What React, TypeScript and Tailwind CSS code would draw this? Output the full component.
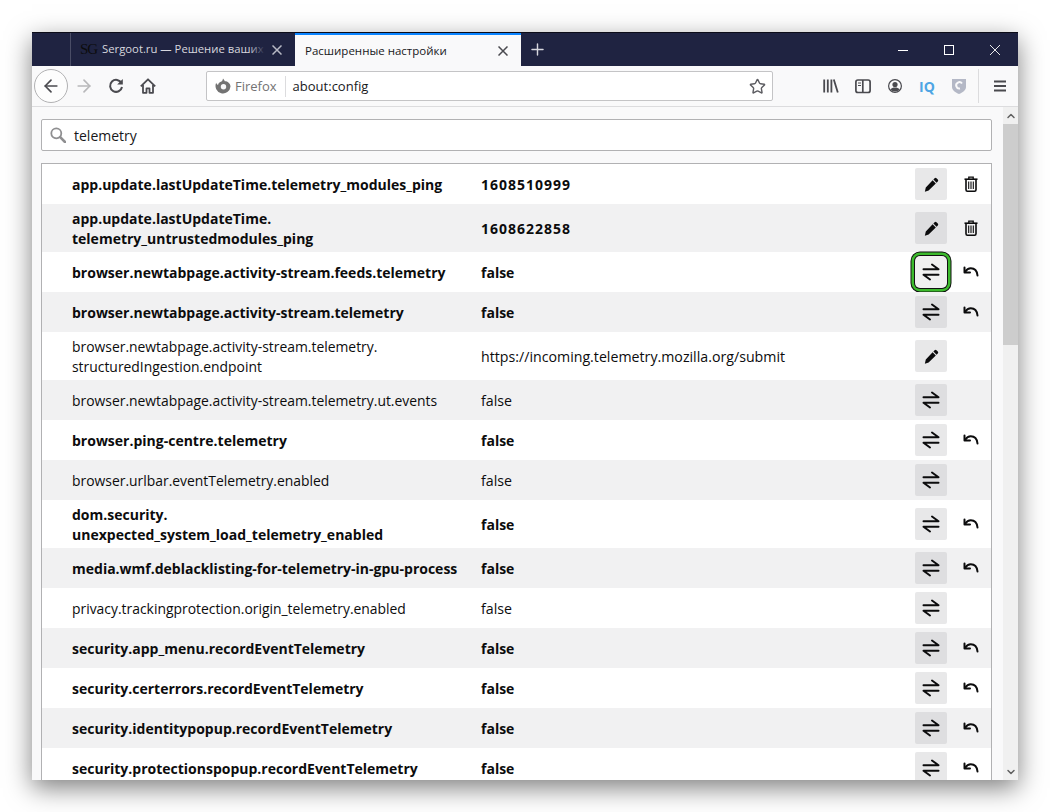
import { ArrowLeft, ArrowRight, Star, Plus, ChevronUp, ChevronDown } from "lucide-react";

type Row = { name: string[]; value: string; bold?: boolean; kind: "edit" | "toggle"; action?: "trash" | "reset"; focus?: boolean };

const rows: Row[] = [
  { name: ["app.update.lastUpdateTime.telemetry_modules_ping"], value: "1608510999", bold: true, kind: "edit", action: "trash" },
  { name: ["app.update.lastUpdateTime.", "telemetry_untrustedmodules_ping"], value: "1608622858", bold: true, kind: "edit", action: "trash" },
  { name: ["browser.newtabpage.activity-stream.feeds.telemetry"], value: "false", bold: true, kind: "toggle", action: "reset", focus: true },
  { name: ["browser.newtabpage.activity-stream.telemetry"], value: "false", bold: true, kind: "toggle", action: "reset" },
  { name: ["browser.newtabpage.activity-stream.telemetry.", "structuredIngestion.endpoint"], value: "https://incoming.telemetry.mozilla.org/submit", kind: "edit" },
  { name: ["browser.newtabpage.activity-stream.telemetry.ut.events"], value: "false", kind: "toggle" },
  { name: ["browser.ping-centre.telemetry"], value: "false", bold: true, kind: "toggle", action: "reset" },
  { name: ["browser.urlbar.eventTelemetry.enabled"], value: "false", kind: "toggle" },
  { name: ["dom.security.", "unexpected_system_load_telemetry_enabled"], value: "false", bold: true, kind: "toggle", action: "reset" },
  { name: ["media.wmf.deblacklisting-for-telemetry-in-gpu-process"], value: "false", bold: true, kind: "toggle", action: "reset" },
  { name: ["privacy.trackingprotection.origin_telemetry.enabled"], value: "false", kind: "toggle" },
  { name: ["security.app_menu.recordEventTelemetry"], value: "false", bold: true, kind: "toggle", action: "reset" },
  { name: ["security.certerrors.recordEventTelemetry"], value: "false", bold: true, kind: "toggle", action: "reset" },
  { name: ["security.identitypopup.recordEventTelemetry"], value: "false", bold: true, kind: "toggle", action: "reset" },
  { name: ["security.protectionspopup.recordEventTelemetry"], value: "false", bold: true, kind: "toggle", action: "reset" },
];

const ToggleIcon = () => (
  <svg width="18" height="18" viewBox="0 0 18 18" fill="none" stroke="#0c0c0d" strokeWidth="2" strokeLinecap="round" strokeLinejoin="round">
    <path d="M1.500 6.200h15L10 1.500" />
    <path d="M16.500 11.800h-15l6.500 4.700" />
  </svg>
);

const ResetIcon = () => (
  <svg width="16" height="16" viewBox="0 0 16 16" fill="none" stroke="#0c0c0d" strokeWidth="2" strokeLinecap="round" strokeLinejoin="round">
    <path d="M1.500 3.500v5h5.500" />
    <path d="M2 8c1.800-2.700 3.800-3.700 5.800-3.700 3.400 0 6.200 2.500 6.700 7.200" />
  </svg>
);

const PencilIcon = () => (
  <svg width="15" height="15" viewBox="0 0 16 16" fill="#0c0c0d">
    <path d="M11.300 1.300a1.400 1.400 0 0 1 2 0l1.400 1.400a1.400 1.400 0 0 1 0 2l-1.300 1.300-3.400-3.400zM9.200 3.400l3.400 3.400-7.700 7.700-4 1.100 1-4.300z" />
  </svg>
);

const TrashIcon = () => (
  <svg width="14" height="16" viewBox="0 0 14 16" fill="none" stroke="#0c0c0d">
    <path d="M.5 3.200h13" strokeWidth="1.600" />
    <path d="M4.800 3V1.200h4.400V3" strokeWidth="1.300" />
    <path d="M2 3.500v10.300c0 .8.600 1.400 1.400 1.400h7.200c.8 0 1.400-.6 1.400-1.400V3.500" strokeWidth="1.600" />
    <path d="M4.700 5.500v7.500M7 5.500v7.500M9.300 5.500v7.500" strokeWidth="1.100" />
  </svg>
);

const ReloadIcon = () => (
  <svg width="16" height="16" viewBox="0 0 16 16" fill="none" stroke="#4a4a4f" strokeWidth="2">
    <path d="M13.500 5.200A6 6 0 1 0 14 9" />
    <path d="M14.800 1v5.600H9.200" fill="#4a4a4f" stroke="none" />
  </svg>
);

const HomeIcon = () => (
  <svg width="16" height="16" viewBox="0 0 16 16" fill="none" stroke="#4a4a4f" strokeWidth="1.800" strokeLinejoin="round">
    <path d="M.8 8.300 8 1.300l7.200 7" />
    <path d="M3 7v7.800h3.500v-4.500h3v4.500H13V7" />
  </svg>
);

const SearchIcon = () => (
  <svg width="16" height="16" viewBox="0 0 16 16" fill="none" stroke="#8f8f91" strokeLinecap="round">
    <circle cx="6.300" cy="6.300" r="5" strokeWidth="1.800" />
    <path d="M10.200 10.200 15 15" strokeWidth="2.600" />
  </svg>
);

const LibraryIcon = () => (
  <svg width="16" height="16" viewBox="0 0 16 16" fill="none" stroke="#4a4a4f" strokeWidth="1.800">
    <path d="M1.200 1.500v13M4.800 1.500v13M8.400 1.500v13M10.800 1.500l4 13" />
  </svg>
);

const SidebarIcon = () => (
  <svg width="16" height="16" viewBox="0 0 16 16" fill="none" stroke="#4a4a4f" strokeWidth="1.700">
    <rect x=".9" y="2" width="14.200" height="12.500" rx="2" />
    <path d="M7.800 2v12.500" />
    <path d="M3 5h3M3 7.500h3" strokeWidth="1" />
  </svg>
);

const AccountIcon = () => (
  <svg width="16" height="16" viewBox="0 0 16 16" fill="#4a4a4f">
    <path fillRule="evenodd" d="M8 1a7 7 0 1 1 0 14A7 7 0 0 1 8 1zm0 1.200a5.800 5.800 0 1 0 0 11.600A5.800 5.800 0 0 0 8 2.200z" />
    <circle cx="8" cy="6.500" r="2.600" />
    <path d="M3.500 11.500c1-1.500 2.500-2 4.500-2s3.500.5 4.500 2c-1 1.300-2.700 2-4.500 2s-3.500-.7-4.500-2z" />
  </svg>
);

const ShieldIcon = () => (
  <svg width="14" height="16" viewBox="0 0 14 16">
    <path d="M0 1h14v8c0 3.500-3.500 5.500-7 7-3.500-1.500-7-3.500-7-7z" fill="#b4b8c6" />
    <path d="M10 5.500A3.200 3.200 0 1 0 8 10.500" fill="none" stroke="#f9f9fa" strokeWidth="2" />
  </svg>
);

const FirefoxIcon = () => (
  <svg width="16" height="16" viewBox="0 0 16 16">
    <path d="M8 .5C9 1.500 9.500 2.300 9.800 3.200 12 3 15.500 5 15.500 8.500A7.500 7.500 0 1 1 1.200 4.800C1.500 6 2 6.500 3 7c.2-2 1.800-3 3.500-3.500C7.200 3 7.800 2 8 .5z" fill="#737373" />
    <circle cx="8.500" cy="8.800" r="2.700" fill="#f9f9fa" />
  </svg>
);

const CloseIcon = ({ color }: { color: string }) => (
  <svg width="10" height="10" viewBox="0 0 10 10" fill="none" stroke={color} strokeWidth="1.500">
    <path d="M.5.500l9 9M9.500.500l-9 9" />
  </svg>
);

const PrefRow = ({ row, index }: { row: Row; index: number }) => (
  <div className={`flex shrink-0 items-center pl-[30px] ${row.name.length > 1 ? "h-[48px]" : "h-[40px]"} ${index % 2 ? "bg-[#f1f1f2]" : "bg-white"}`}>
    <div className={`w-[409px] shrink-0 pt-[2px] leading-[20px] text-[#0c0c0d] ${row.bold ? "text-[14px] font-bold" : "text-[13.900px]"}`}>
      {row.name.map((line) => (
        <div key={line} className="whitespace-nowrap">{line}</div>
      ))}
    </div>
    <div className={`flex-1 pt-[2px] leading-[20px] whitespace-nowrap text-[#0c0c0d] ${row.bold ? "text-[14px] font-bold" : "text-[14.200px]"} ${row.kind === "edit" && row.bold ? "tracking-[1px]" : ""}`}>{row.value}</div>
    <div className={`flex h-[32px] w-[32px] items-center justify-center ${row.focus ? "rounded-[5px] bg-[#f0f0f0] shadow-[0_0_0_1px_#111,0_0_0_3.500px_#3cba2c,0_0_0_4.500px_#111]" : index % 2 ? "rounded-[2px] bg-[#dedee0]" : "rounded-[2px] bg-[#e8e8e9]"}`}>
      {row.kind === "edit" ? <PencilIcon /> : <ToggleIcon />}
    </div>
    <div className="flex w-[44px] items-center justify-center pl-[4px]">
      {row.action === "trash" && <TrashIcon />}
      {row.action === "reset" && <ResetIcon />}
    </div>
  </div>
);

export default function App() {
  return (
    <div className="h-[812px] w-[1050px] overflow-hidden bg-white pl-[32px] pt-[32px] font-['Open_Sans','Noto_Sans',sans-serif]">
      <div className="flex h-[748px] w-[986px] flex-col overflow-hidden bg-[#f9f9fa] shadow-[0_8px_24px_rgba(0,0,0,0.5)]">
        {/* title bar */}
        <div className="flex h-[34px] shrink-0 items-stretch border-t border-[#0c0c18] bg-[#1f2341]">
          <div className="w-[38px] shrink-0" />
          <div className="w-px bg-[#4a4d66]" />
          <div className="flex w-[224px] items-center pl-[9px] pr-[13px] text-[11.300px] text-[#d7d7de]">
            <span className="mr-[6px] w-[16px] shrink-0 font-['Liberation_Serif',serif] text-[15px] leading-none tracking-[-1px] text-[#0c0c0d]">SG</span>
            <div className="relative flex-1 overflow-hidden whitespace-nowrap">
              Sergoot.ru — Решение ваших
              <div className="absolute inset-y-0 right-0 w-[16px] bg-gradient-to-r from-transparent to-[#1f2341]" />
            </div>
            <span className="ml-[7px] shrink-0"><CloseIcon color="#b8b9c5" /></span>
          </div>
          <div className="flex w-[226px] items-center border-t-2 border-[#0a84ff] bg-[#f9f9fa] pl-[10px] pr-[13px] text-[11.500px] text-[#18181a]">
            <span className="flex-1 whitespace-nowrap">Расширенные настройки</span>
            <CloseIcon color="#4a4a4f" />
          </div>
          <div className="flex w-[32px] items-center justify-center">
            <Plus size={19} color="#d7d7de" strokeWidth={1.800} />
          </div>
          <div className="flex-1" />
          <div className="flex items-center">
            <div className="flex w-[46px] justify-center">
              <svg width="10" height="10" viewBox="0 0 10 10" stroke="#fff" strokeWidth="1"><path d="M0 5.500h10" /></svg>
            </div>
            <div className="flex w-[46px] justify-center">
              <svg width="10" height="10" viewBox="0 0 10 10" fill="none" stroke="#fff" strokeWidth="1"><rect x=".5" y=".5" width="9" height="9" /></svg>
            </div>
            <div className="flex w-[46px] justify-center">
              <svg width="10" height="10" viewBox="0 0 10 10" fill="none" stroke="#fff" strokeWidth="0.900"><path d="M0 0l10 10M10 0L0 10" /></svg>
            </div>
          </div>
        </div>

        {/* toolbar */}
        <div className="flex h-[41px] shrink-0 items-center border-b border-[#dcdcde] bg-[#f9f9fa]">
          <div className="ml-[2px] flex h-[34px] w-[34px] shrink-0 items-center justify-center rounded-full border border-[#b1b1b3] bg-[#fdfdfd]">
            <ArrowLeft size={20} color="#4a4a4f" strokeWidth={2} />
          </div>
          <div className="flex w-[32px] shrink-0 justify-center"><ArrowRight size={20} color="#b8b8ba" strokeWidth={2} /></div>
          <div className="flex w-[32px] shrink-0 justify-center"><ReloadIcon /></div>
          <div className="flex w-[32px] shrink-0 justify-center"><HomeIcon /></div>
          <div className="ml-[42px] flex h-[30px] w-[567px] shrink-0 items-center rounded-[2px] border border-[#c4c4c6] bg-white pl-[8px] pr-[6px]">
            <FirefoxIcon />
            <span className="ml-[4px] pt-[2px] text-[13px] text-[#737373]">Firefox</span>
            <div className="ml-[8px] h-[21px] w-px bg-[#dcdcde]" />
            <span className="ml-[7px] flex-1 pt-[2px] text-[13px] text-[#18181a]">about:config</span>
            <Star size={17} color="#5c5c61" strokeWidth={2} />
          </div>
          <div className="ml-[42px] flex w-[32px] shrink-0 justify-center"><LibraryIcon /></div>
          <div className="flex w-[32px] shrink-0 justify-center"><SidebarIcon /></div>
          <div className="flex w-[32px] shrink-0 justify-center"><AccountIcon /></div>
          <div className="flex w-[32px] shrink-0 justify-center text-[14px] font-bold text-[#4ea5e4]">IQ</div>
          <div className="flex w-[32px] shrink-0 justify-center"><ShieldIcon /></div>
          <div className="ml-[3px] h-[34px] w-px shrink-0 bg-[#dcdcde]" />
          <div className="flex w-[39px] shrink-0 justify-center pl-[3px]">
            <svg width="14" height="14" viewBox="0 0 14 14" fill="none" stroke="#4a4a4f" strokeWidth="1.800">
              <path d="M1 2.500h12M1 7h12M1 11.500h12" />
            </svg>
          </div>
        </div>

        {/* content */}
        <div className="flex min-h-0 flex-1">
          <div className="flex min-w-0 flex-1 flex-col pl-[9px] pr-[11px] pt-[12px]">
            <div className="flex h-[32px] shrink-0 items-center rounded-[2px] border border-[#b1b1b3] bg-white pl-[8px] text-[14px] text-[#18181a]">
              <SearchIcon />
              <span className="ml-[8px]">telemetry</span>
            </div>
            <div className="mt-[12px] flex min-h-0 flex-1 flex-col overflow-hidden border-x border-t border-[#b1b1b3]">
              {rows.map((row, i) => (
                <PrefRow key={row.name[0]} row={row} index={i} />
              ))}
            </div>
          </div>
          {/* scrollbar */}
          <div className="flex w-[15px] shrink-0 flex-col bg-[#f0f0f0]">
            <div className="flex h-[17px] shrink-0 items-center justify-center"><ChevronUp size={12} color="#606060" strokeWidth={3} /></div>
            <div className="h-[221px] shrink-0 bg-[#cdcdcd]" />
            <div className="flex-1" />
            <div className="flex h-[17px] shrink-0 items-center justify-center"><ChevronDown size={12} color="#606060" strokeWidth={3} /></div>
          </div>
        </div>
      </div>
    </div>
  );
}
